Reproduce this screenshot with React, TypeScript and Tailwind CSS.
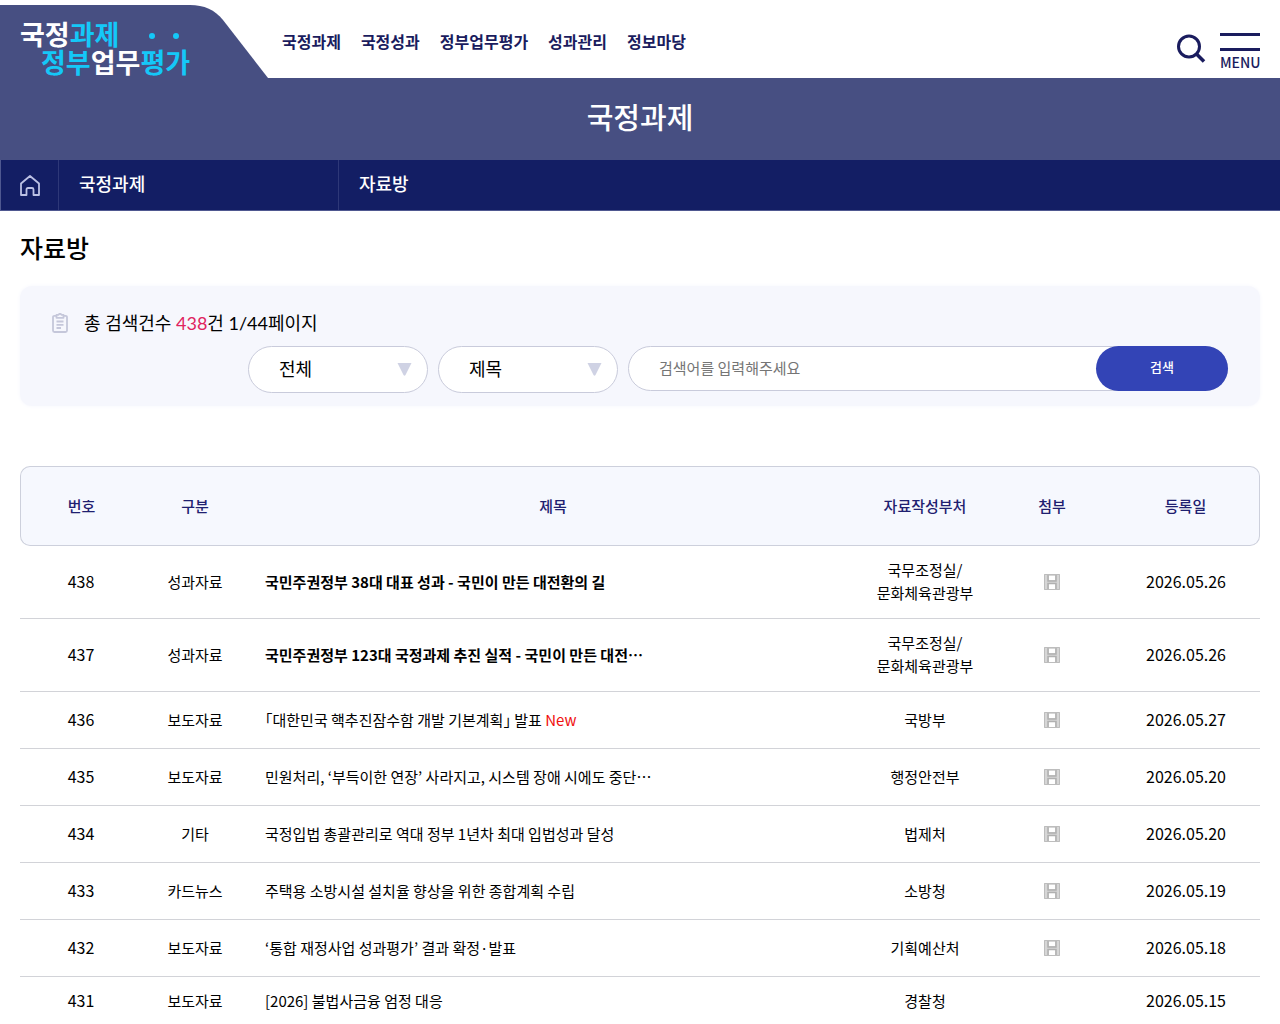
import React from "react";

const NAV = ["국정과제", "국정성과", "정부업무평가", "성과관리", "정보마당"];

type Row = {
  no: number;
  kind: string;
  title: string;
  dept: string[];
  date: string;
  bold?: boolean;
  isNew?: boolean;
  file?: boolean;
};

const ROWS: Row[] = [
  { no: 438, kind: "성과자료", title: "국민주권정부 38대 대표 성과 - 국민이 만든 대전환의 길", dept: ["국무조정실/", "문화체육관광부"], date: "2026.05.26", bold: true, file: true },
  { no: 437, kind: "성과자료", title: "국민주권정부 123대 국정과제 추진 실적 - 국민이 만든 대전⋯", dept: ["국무조정실/", "문화체육관광부"], date: "2026.05.26", bold: true, file: true },
  { no: 436, kind: "보도자료", title: "｢대한민국 핵추진잠수함 개발 기본계획｣ 발표", dept: ["국방부"], date: "2026.05.27", isNew: true, file: true },
  { no: 435, kind: "보도자료", title: "민원처리, ‘부득이한 연장’ 사라지고, 시스템 장애 시에도 중단⋯", dept: ["행정안전부"], date: "2026.05.20", file: true },
  { no: 434, kind: "기타", title: "국정입법 총괄관리로 역대 정부 1년차 최대 입법성과 달성", dept: ["법제처"], date: "2026.05.20", file: true },
  { no: 433, kind: "카드뉴스", title: "주택용 소방시설 설치율 향상을 위한 종합계획 수립", dept: ["소방청"], date: "2026.05.19", file: true },
  { no: 432, kind: "보도자료", title: "‘통합 재정사업 성과평가’ 결과 확정·발표", dept: ["기획예산처"], date: "2026.05.18", file: true },
  { no: 431, kind: "보도자료", title: "[2026] 불법사금융 엄정 대응", dept: ["경찰청"], date: "2026.05.15" },
];

function DiskIcon() {
  return (
    <svg width="16" height="16" viewBox="0 0 16 16" fill="none" aria-hidden="true">
      <path d="M0 0h16v16H0z" fill="#d6d6d6" />
      <path d="M5 2h6v4H5zM5 10h6v5H5z" fill="#fff" />
      <path d="M.5.5h15v15H.5z" stroke="#bdbdbd" />
      <path d="M4 1v6h8V1M4 15V9.500h8V15" stroke="#b0b0b0" strokeWidth="1.500" />
    </svg>
  );
}

function Logo() {
  return (
    <a href="#" className="relative block h-full w-[268px] shrink-0 text-[27px] leading-7 font-bold text-white">
      <svg className="absolute inset-0" width="268" height="78" viewBox="0 0 268 78" aria-hidden="true">
        <path d="M0 5H190C204 5 215 10 223 20L268 78H0Z" fill="#474f82" />
        <circle cx="152" cy="36" r="3" fill="#14c8f8" />
        <circle cx="176" cy="36" r="3" fill="#14c8f8" />
      </svg>
      <span className="relative block pt-5 pl-5">
        국정<span className="text-[#14c8f8]">과제</span>
      </span>
      <span className="relative block pl-[41px]">
        <span className="text-[#14c8f8]">정부</span>업무<span className="text-[#14c8f8]">평가</span>
      </span>
    </a>
  );
}

function SelectBox({ label, value }: { label: string; value: string }) {
  return (
    <div className="relative w-[180px] shrink-0">
      <select
        aria-label={label}
        className="h-[47px] w-full appearance-none rounded-full border border-[#c9cbdb] bg-white pr-10 pb-[3px] pl-[30px] text-lg text-black"
      >
        <option>{value}</option>
      </select>
      <svg className="pointer-events-none absolute top-[17px] right-4" width="15" height="13" viewBox="0 0 15 13" aria-hidden="true">
        <path d="M.5 0h14L8.500 12q-1 1.500-2 0z" fill="#cfd2e4" />
      </svg>
    </div>
  );
}

export default function App() {
  return (
    <div className="bg-white font-['Noto_Sans_CJK_KR',sans-serif] text-base text-black">
      <header className="flex h-[78px] items-stretch">
        <Logo />
        <nav className="flex grow items-start gap-5 pt-[29px] pl-[14px] leading-6 font-bold text-[#1a1c5e]">
          {NAV.map((n) => (
            <a key={n} href="#">
              {n}
            </a>
          ))}
        </nav>
        <div className="flex items-start gap-[14px] pt-[33px] pr-5 text-[#1a1c5e]">
          <button aria-label="검색 열기">
            <svg width="30" height="30" viewBox="0 0 30 30" fill="none" stroke="currentColor" strokeWidth="3" aria-hidden="true">
              <circle cx="13" cy="13.500" r="10.500" />
              <path d="M20.500 21l7.500 7.500" strokeWidth="3.500" />
            </svg>
          </button>
          <button className="flex w-10 flex-col">
            <span className="h-[18px] w-full border-y-3 border-current" />
            <span className="text-sm leading-[22px] font-medium">MENU</span>
          </button>
        </div>
      </header>

      <div className="flex h-[82px] items-center justify-center bg-[#474f82] pb-1 text-[29px] font-medium text-white">
        국정과제
      </div>

      <nav className="flex h-[51px] border-b border-l border-[#4f5890] bg-[#131e64] text-lg font-medium text-white">
        <a href="#" aria-label="홈" className="flex w-[58px] items-center justify-center border-r border-[#2e3878]">
          <svg width="20" height="21" viewBox="0 0 20 21" fill="none" stroke="#bcc1e4" strokeWidth="1.800" strokeLinejoin="round" aria-hidden="true">
            <path d="M1 8.500L10 1l9 7.500V20h-5.500v-5.500q0-1.500-1.500-1.500H8q-1.500 0-1.500 1.500V20H1z" />
          </svg>
        </a>
        <a href="#" className="flex w-[280px] items-center border-r border-[#2e3878] pb-1 pl-5">
          국정과제
        </a>
        <a href="#" className="flex items-center pb-1 pl-5">
          자료방
        </a>
      </nav>

      <main className="px-5">
        <h1 className="pt-4 text-[25px] leading-10 font-medium">자료방</h1>

        <section className="mt-[19px] rounded-xl bg-[#f6f7fd] pt-[23px] pr-8 pb-[13px] pl-8 shadow-[0_0_4px_#f6f7fd]">
          <p className="flex items-center gap-4 font-['Lato','Noto_Sans_CJK_KR',sans-serif] text-lg leading-7">
            <svg width="16" height="20" viewBox="0 0 16 20" fill="none" stroke="#c5c7da" strokeWidth="1.800" strokeLinejoin="round" aria-hidden="true">
              <path d="M4.500 2.800H2.500q-1.500 0-1.500 1.500V17.500q0 1.500 1.500 1.500h11q1.500 0 1.500-1.500V4.300q0-1.500-1.500-1.500h-2M4.500 1.800h1.800q1.700-2 3.400 0h1.800v3h-7zM4.500 8.500h7M4.500 11.800h7M4.500 15h4.500" />
            </svg>
            <span>
              총 검색건수 <span className="text-[#e02460]">438</span>건 1/44페이지
            </span>
          </p>
          <form className="mt-[9px] flex items-start gap-[10px] pl-[196px]" onSubmit={(e) => e.preventDefault()}>
            <SelectBox label="구분" value="전체" />
            <SelectBox label="검색조건" value="제목" />
            <div className="relative grow">
              <input
                type="text"
                aria-label="검색어"
                placeholder="검색어를 입력해주세요"
                className="h-[45px] w-full rounded-full border border-[#c9cbdb] bg-white pr-36 pb-[3px] pl-[30px] text-[15px] placeholder:text-[#757575]"
              />
              <button className="absolute top-0 right-0 h-[45px] w-[132px] rounded-full bg-[#3344b6] pb-[3px] text-[13px] font-medium text-white">
                검색
              </button>
            </div>
          </form>
        </section>

        <table className="mt-[60px] w-full table-fixed border-separate border-spacing-0 text-center text-[15px] leading-[23px]">
          <colgroup>
            <col className="w-[122px]" />
            <col className="w-[106px]" />
            <col />
            <col className="w-[134px]" />
            <col className="w-[120px]" />
            <col className="w-[148px]" />
          </colgroup>
          <thead>
            <tr className="h-20 text-[#1f2070] *:border-y *:border-[#cdd0dc] *:bg-[#f6f8fe] *:pb-[2px] *:font-medium">
              <th className="rounded-l-[10px] border-l">번호</th>
              <th>구분</th>
              <th>제목</th>
              <th>자료작성부처</th>
              <th>첨부</th>
              <th className="rounded-r-[10px] border-r">등록일</th>
            </tr>
          </thead>
          <tbody>
            {ROWS.map((r) => (
              <tr key={r.no} className="*:border-b *:border-[#d2d3d8] *:pt-3 *:pb-[14px]">
                <td className="text-base leading-[23px]">{r.no}</td>
                <td>{r.kind}</td>
                <td className="pl-[17px] text-left">
                  <a href="#" className={r.bold ? "font-bold" : ""}>
                    {r.title}
                    {r.isNew && <span className="text-[#f01010]"> New</span>}
                  </a>
                </td>
                <td>
                  {r.dept.map((d) => (
                    <div key={d}>{d}</div>
                  ))}
                </td>
                <td>
                  {r.file && (
                    <a href="#" aria-label="첨부파일" className="flex h-[30px] items-center justify-center pt-px">
                      <DiskIcon />
                    </a>
                  )}
                </td>
                <td className="text-base leading-[23px]">{r.date}</td>
              </tr>
            ))}
          </tbody>
        </table>
      </main>
    </div>
  );
}
